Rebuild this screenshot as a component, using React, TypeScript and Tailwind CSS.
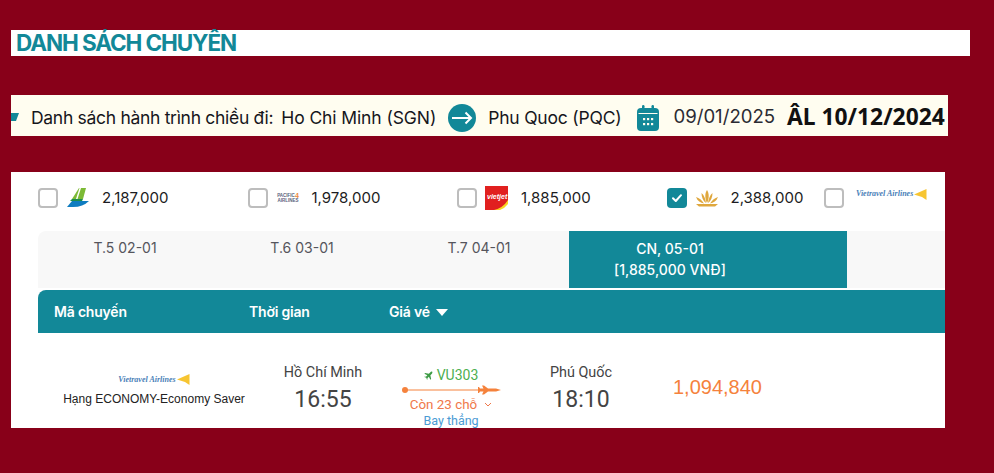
const airlines = [
  { id: 'bamboo', price: '2,187,000', checked: false },
  { id: 'pacific', price: '1,978,000', checked: false },
  { id: 'vietjet', price: '1,885,000', checked: false },
  { id: 'vna', price: '2,388,000', checked: true },
];

const tabs = ['T.5 02-01', 'T.6 03-01', 'T.7 04-01'];

function Checkbox({ checked }: { checked: boolean }) {
  if (checked) {
    return (
      <span className="flex h-5 w-5 shrink-0 items-center justify-center rounded-[4px] bg-[#128898]">
        <svg width="12" height="10" viewBox="0 0 12 10" fill="none" stroke="#fff" strokeWidth="2" strokeLinecap="round" strokeLinejoin="round">
          <path d="M2 5.2 4.8 8 10 2.2" />
        </svg>
      </span>
    );
  }
  return <span className="h-5 w-5 shrink-0 rounded-[4px] border-2 border-[#bdbdbd] bg-white" />;
}

function VietravelLogo() {
  return (
    <span className="flex items-center">
      <span className="font-['Liberation_Serif',serif] text-[8px] leading-none font-bold text-[#4a7fb8] italic">
        Vietravel Airlines
      </span>
      <svg width="13" height="11" viewBox="0 0 13 11" className="ml-px">
        <path d="M0 5.500 12.500 0v11L8 8z" fill="#f7c531" />
      </svg>
    </span>
  );
}

function AirlineLogo({ id }: { id: string }) {
  if (id === 'bamboo') {
    return (
      <svg width="24" height="22" viewBox="0 0 24 22">
        <path d="M13 1h7l-3 11H6z" fill="#7cba35" />
        <path d="M13.500 1h1.500L11.500 12H10z" fill="#fff" />
        <path d="M6 12h11l-1 2H4z" fill="#1e8e4a" />
        <path d="M1 20 6 14h17q-6 6-16 6z" fill="#0f7cc0" />
      </svg>
    );
  }
  if (id === 'pacific') {
    return (
      <span className="-ml-[1px] flex w-[27px] flex-col items-center font-['Liberation_Sans',sans-serif] text-[4.5px] leading-[5px] font-bold text-[#5b5f7c]">
        <span className="flex items-center">
          PACIFIC
          <span className="text-[7px] leading-[5px] text-[#ee8a3c]">4</span>
        </span>
        <span>AIRLINES</span>
      </span>
    );
  }
  if (id === 'vietjet') {
    return (
      <span className="relative">
        <svg width="23" height="24" viewBox="0 0 23 24" className="block">
          <rect width="23" height="24" fill="#e1201f" />
          <path d="M9 24q9-2 14-10v10z" fill="#f9d423" />
          <path d="M15 24q5-2 8-6v6z" fill="#fff" />
        </svg>
        <span className="absolute top-[7px] left-[2px] font-['Liberation_Sans',sans-serif] text-[7px] leading-none font-bold text-white italic">
          vietjet
        </span>
      </span>
    );
  }
  return (
    <svg width="24" height="18" viewBox="0 0 24 18" fill="#dfa73d">
      <path d="M12 1c2 3 2.500 8 0 13-2.500-5-2-10 0-13z" />
      <path d="M6.500 4c2.500 2 4 6 4.500 10C8 12 6.500 8 6.500 4zM17.500 4c-2.500 2-4 6-4.500 10 3-2 4.500-6 4.500-10z" />
      <path d="M1 8c3 1 6 3 8 6.500C5.500 14 2.500 12 1 8zM23 8c-3 1-6 3-8 6.500 3.500-.5 6.500-2.500 8-6.500z" />
      <path d="M1 15h22l-3 2.500H4z" />
    </svg>
  );
}

export default function App() {
  return (
    <div className="flex min-h-[473px] flex-col bg-[#880019] pt-[30px] pl-[11px] font-['Inter',sans-serif]">
      <div className="h-[26px] w-[959px] bg-white pl-[5px] text-[22.500px] leading-[26px] font-bold tracking-[-1.100px] text-[#128898]">
        DANH SÁCH CHUYÊN
      </div>

      <div className="mt-[39px] flex h-[41px] w-[937px] items-center bg-[#fffdf0] pt-[5px] text-[17.500px] whitespace-nowrap text-[#16161c]">
        <svg width="8" height="8" viewBox="0 0 8 8" className="-mt-[2px] shrink-0">
          <path d="M0 0h8L5 8H0z" fill="#128898" />
        </svg>
        <span className="ml-3 tracking-[-0.3px]">Danh sách hành trình chiều đi:</span>
        <span className="ml-2 tracking-[-0.1px]">Ho Chi Minh (SGN)</span>
        <svg width="28" height="28" viewBox="0 0 28 28" className="ml-3 shrink-0">
          <circle cx="14" cy="14" r="14" fill="#128898" />
          <path d="M4 14h19M17.500 8.500 23 14l-5.500 5.500" fill="none" stroke="#fff" strokeWidth="2" />
        </svg>
        <span className="ml-3 tracking-[-0.2px]">Phu Quoc (PQC)</span>
        <svg width="22" height="26" viewBox="0 0 22 26" className="ml-4 shrink-0">
          <rect x="0" y="3" width="22" height="23" rx="4" fill="#128898" />
          <rect x="5" y="0" width="2.500" height="6" rx="1.200" fill="#128898" />
          <rect x="14.500" y="0" width="2.500" height="6" rx="1.200" fill="#128898" />
          <rect x="1.500" y="8" width="19" height="1" fill="#fffdf0" />
          <g fill="#fffdf0">
            <rect x="6" y="13" width="2.200" height="2.200" />
            <rect x="10" y="13" width="2.200" height="2.200" />
            <rect x="14" y="13" width="2.200" height="2.200" />
            <rect x="6" y="18" width="2.200" height="2.200" />
            <rect x="10" y="18" width="2.200" height="2.200" />
            <rect x="14" y="18" width="2.200" height="2.200" />
          </g>
        </svg>
        <span className="-mt-[2px] ml-[14px] text-[18.600px] text-[#2b2b33]">09/01/2025</span>
        <span className="-mt-[1px] ml-[12px] font-['Noto_Sans',sans-serif] text-[22.800px] font-bold text-[#111]">ÂL 10/12/2024</span>
      </div>

      <div className="mt-[36px] h-[256px] w-[934px] overflow-hidden bg-white pl-[27px]">
        <div className="flex h-[59px] items-start pt-4">
          {airlines.map((a) => (
            <div key={a.id} className="flex h-5 w-[209.500px] shrink-0 items-center">
              <Checkbox checked={a.checked} />
              <span className="ml-[8px] flex w-[36px] shrink-0 items-center">
                <AirlineLogo id={a.id} />
              </span>
              <span className="text-[15px] text-[#1c1c22]">{a.price}</span>
            </div>
          ))}
          <div className="-ml-[52px] flex h-5 items-center">
            <Checkbox checked={false} />
            <span className="mb-2 ml-3">
              <VietravelLogo />
            </span>
          </div>
        </div>

        <div className="flex h-[57px] rounded-tl-lg bg-[#f8f8f8]">
          {tabs.map((t) => (
            <div key={t} className="w-[177px] shrink-0 pt-[7px] pr-[3px] text-center text-sm leading-5 text-[#55555c]">
              {t}
            </div>
          ))}
          <div className="w-[278px] shrink-0 bg-[#128898] pt-[7px] pr-[76px] text-center text-sm leading-[21px] font-medium text-white">
            <div>CN, 05-01</div>
            <div>[1,885,000 VNĐ]</div>
          </div>
        </div>

        <div className="mt-[2px] flex h-[43px] items-center rounded-tl-lg bg-[#128898] text-sm font-semibold tracking-[-0.2px] text-white">
          <span className="ml-4 w-[195px]">Mã chuyến</span>
          <span className="w-[140px]">Thời gian</span>
          <span>Giá vé</span>
          <svg width="12" height="7" viewBox="0 0 12 7" className="mt-[2px] ml-[6px]">
            <path d="M0 0h12L6 7z" fill="#fff" />
          </svg>
        </div>

        <div className="flex h-[95px] items-start font-['Liberation_Sans',sans-serif]">
          <div className="flex w-[232px] shrink-0 flex-col items-center pt-[41px]">
            <VietravelLogo />
            <div className="mt-[7px] text-xs leading-[14px] text-[#222]">Hạng ECONOMY-Economy Saver</div>
          </div>
          <div className="-ml-[2px] flex w-[110px] shrink-0 flex-col items-center pt-[31px] font-['Roboto',sans-serif] text-[#444]">
            <div className="text-[14.400px] leading-[18px]">Hồ Chí Minh</div>
            <div className="mt-[4px] text-[23px] leading-[28px]">16:55</div>
          </div>
          <div className="ml-[18px] flex w-[110px] shrink-0 flex-col items-center pt-[34px] font-['Roboto',sans-serif]">
            <div className="flex h-[17px] items-center gap-1 text-sm leading-[17px] text-[#4caf50]">
              <svg width="9" height="9" viewBox="0 0 24 24" fill="#3d9b45">
                <path d="M22 2c-1.500-1-4 0-5 1l-4 4-10-2-2 2 8 4-4 4-3-.5L1 16l5 2 2 5 1.500-1-.5-3 4-4 4 8 2-2-2-10 4-4c1-1 2-3.500 1-5z" />
              </svg>
              VU303
            </div>
            <svg width="102" height="12" viewBox="0 0 102 12">
              <circle cx="5" cy="6" r="3" fill="#f5823c" />
              <path d="M5 6h92" stroke="#f5823c" strokeWidth="1" />
              <path d="M82 1.500h2l4 3h8l5 1.500-5 1.500h-8l-4 3h-2l1.500-3h-3.500l-1 1.500h-1v-6h1l1 1.500h3.500z" fill="#f5823c" />
            </svg>
            <div className="flex items-center gap-[7px] text-[13.400px] leading-[17px] text-[#f0784a]">
              Còn 23 chỗ
              <svg width="8" height="5" viewBox="0 0 8 5" fill="none" stroke="#f0784a" strokeWidth="1">
                <path d="M1 1l3 3 3-3" />
              </svg>
            </div>
            <div className="mt-[1px] text-[12.500px] leading-[14px] text-[#4a9bd4]">Bay thẳng</div>
          </div>
          <div className="ml-[45px] flex w-[60px] shrink-0 flex-col items-center whitespace-nowrap pt-[31px] font-['Roboto',sans-serif] text-[#444]">
            <div className="text-[14.400px] leading-[18px]">Phú Quốc</div>
            <div className="mt-[4px] text-[23px] leading-[28px]">18:10</div>
          </div>
          <div className="ml-[62px] pt-[42px] text-[20px] leading-6 text-[#f5823c]">1,094,840</div>
        </div>
      </div>
    </div>
  );
}
